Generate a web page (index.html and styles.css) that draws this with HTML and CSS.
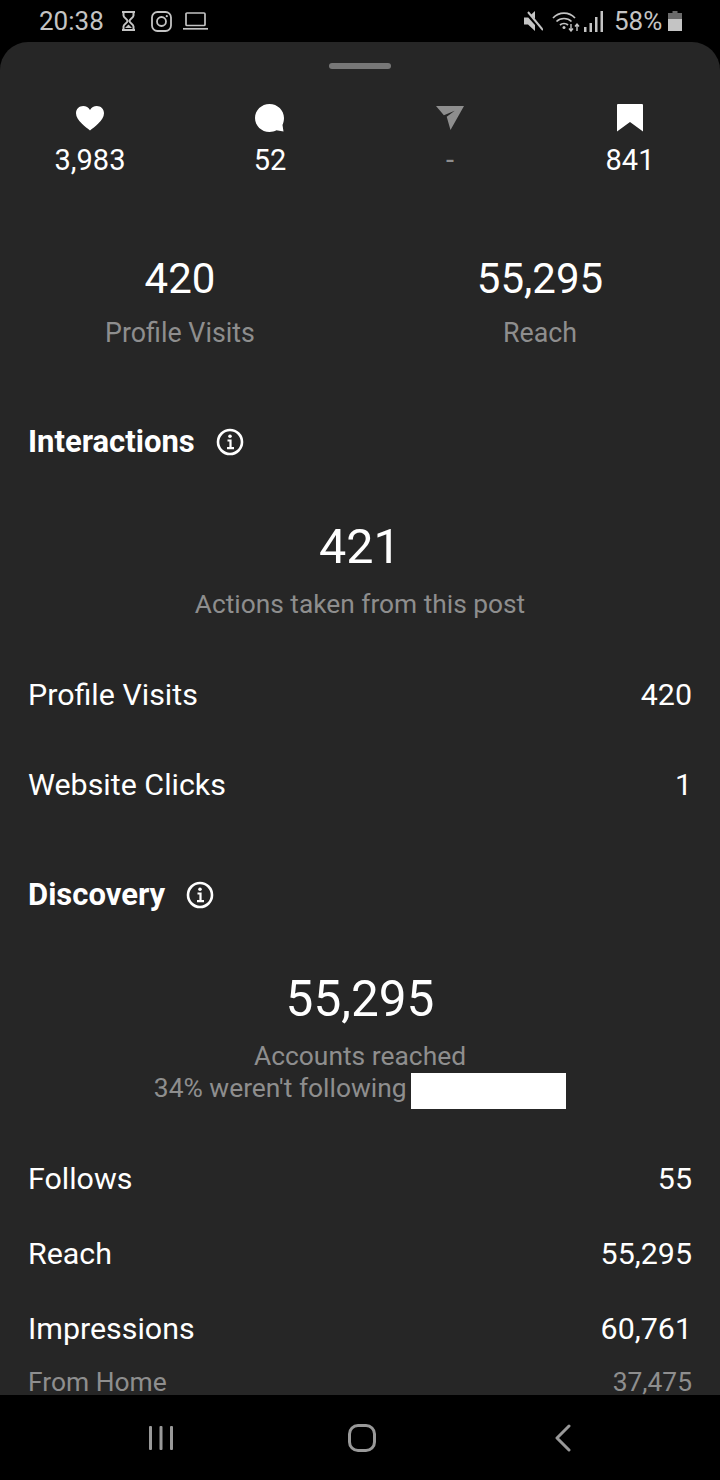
FILE: index.html
```html
<!DOCTYPE html>
<html lang="en">
<head>
    <meta charset="UTF-8" />
    <title>Post Insights</title>
    <link rel="stylesheet" href="styles.css">
</head>
<body>

<header class="status-bar">
    <span class="clock">20:38</span>
    <svg class="st-hourglass" width="15" height="20" viewBox="0 0 15 20" fill="none" stroke="#c4c4c4" stroke-width="2">
        <path d="M1 1h13M1 19h13M2.500 1v3.500c0 2.500 4 3.500 4 5.500s-4 3-4 5.500V19M12.500 1v3.500c0 2.500-4 3.500-4 5.500s4 3 4 5.500V19"/>
        <path d="M4 17l3.500-3.500L11 17z" fill="#c4c4c4" stroke="none"/>
    </svg>
    <svg class="st-insta" width="21" height="21" viewBox="0 0 21 21" fill="none" stroke="#c4c4c4" stroke-width="1.8">
        <rect x="1" y="1" width="19" height="19" rx="5.500"/>
        <circle cx="10.500" cy="10.500" r="4.500"/>
        <circle cx="15.800" cy="5.200" r="1.100" fill="#c4c4c4" stroke="none"/>
    </svg>
    <svg class="st-laptop" width="25" height="18" viewBox="0 0 25 18" fill="none" stroke="#c4c4c4" stroke-width="1.7">
        <rect x="3" y="1" width="19" height="12.500" rx="1"/>
        <path d="M0 16.800h25"/>
    </svg>
    <span class="status-spacer"></span>
    <svg class="st-mute" width="20" height="20" viewBox="0 0 20 20">
        <path d="M1 6.500h4L12 0v20l-7-6.500H1z" fill="#c4c4c4"/>
        <path d="M2 0l18 20" stroke="#000" stroke-width="4"/>
        <path d="M5 1l15 18" stroke="#c4c4c4" stroke-width="2"/>
    </svg>
    <svg class="st-wifi" width="28" height="21" viewBox="0 0 28 21" fill="none" stroke="#c4c4c4" stroke-width="1.700">
        <path d="M1 7c6-6.500 16-6.500 22 0M4.500 10.500c4-4 11-4 15 0M8 14c2.200-2 5.800-2 8 0"/>
        <circle cx="12" cy="16.500" r="1.500" fill="#c4c4c4" stroke="none"/>
        <path d="M19 13v7M17 17.500l2 2.500 2-2.500M25 20v-7M23 15.500l2-2.500 2 2.500" stroke-width="1.400"/>
    </svg>
    <svg class="st-signal" width="19" height="21" viewBox="0 0 19 21" fill="#c4c4c4">
        <rect x="0" y="16" width="2.500" height="5"/>
        <rect x="5.500" y="12" width="2.500" height="9"/>
        <rect x="11" y="6" width="2.500" height="15"/>
        <rect x="16.500" y="0" width="2.500" height="21"/>
    </svg>
    <span class="battery-pct">58%</span>
    <svg class="st-battery" width="14" height="20" viewBox="0 0 14 20">
        <path d="M4.500 0h5v2H14v18H0V2h4.500z" fill="#6a6a6a"/>
        <path d="M0 8h14v12H0z" fill="#c4c4c4"/>
    </svg>
</header>

<main class="sheet">
    <div class="handle"></div>

    <section class="counts">
        <div class="count">
            <svg width="28" height="28" viewBox="0 0 28 28" fill="#fff">
                <path d="M14 26.500C10 23 0 16.500 0 9.200 0 4.800 3.300 2 7.200 2 10 2 12.600 3.400 14 6c1.400-2.600 4-4 6.800-4C24.700 2 28 4.800 28 9.200c0 7.300-10 13.800-14 17.300z"/>
            </svg>
            <span class="count-value">3,983</span>
        </div>
        <div class="count">
            <svg width="30" height="28" viewBox="0 0 30 28" fill="#fff">
                <path d="M14.500 0C22.500 0 29 6.300 29 14c0 3-.8 5.300-1.500 7l1 6.500-7-1.200c-2 1-4.500 1.700-7 1.700C6.500 28 0 21.700 0 14S6.500 0 14.500 0z"/>
            </svg>
            <span class="count-value">52</span>
        </div>
        <div class="count muted">
            <svg width="28" height="28" viewBox="0 0 28 28" fill="#8e8e8e">
                <path d="M0 2h28L14.500 26l-3.800-13.200 8-6-10.800 4.400z"/>
            </svg>
            <span class="count-value">-</span>
        </div>
        <div class="count">
            <svg width="26" height="28" viewBox="0 0 26 28" fill="#fff">
                <path d="M0 1a1 1 0 0 1 1-1h24a1 1 0 0 1 1 1v26.500L13 18 0 27.500z"/>
            </svg>
            <span class="count-value">841</span>
        </div>
    </section>

    <section class="stats">
        <div>
            <div class="stat-value">420</div>
            <div class="caption">Profile Visits</div>
        </div>
        <div>
            <div class="stat-value">55,295</div>
            <div class="caption">Reach</div>
        </div>
    </section>

    <h2 class="section-title first">
        Interactions
        <svg class="info" width="28" height="28" viewBox="0 0 28 28" fill="none" stroke="#fff" stroke-width="2.600">
            <circle cx="14" cy="14" r="12"/>
            <path d="M11.500 12.500H14.500V20M11 20.200h7" stroke-width="2.200"/>
            <circle cx="14" cy="8.200" r="1.800" fill="#fff" stroke="none"/>
        </svg>
    </h2>

    <div class="summary">
        <div class="summary-value">421</div>
        <div class="caption summary-caption">Actions taken from this post</div>
    </div>

    <div class="rows interactions">
        <div class="row"><span>Profile Visits</span><span>420</span></div>
        <div class="row"><span>Website Clicks</span><span>1</span></div>
    </div>

    <h2 class="section-title second">
        Discovery
        <svg class="info" width="28" height="28" viewBox="0 0 28 28" fill="none" stroke="#fff" stroke-width="2.600">
            <circle cx="14" cy="14" r="12"/>
            <path d="M11.500 12.500H14.500V20M11 20.200h7" stroke-width="2.200"/>
            <circle cx="14" cy="8.200" r="1.800" fill="#fff" stroke="none"/>
        </svg>
    </h2>

    <div class="summary reach">
        <div class="summary-value wide">55,295</div>
        <div class="reach-note">
            Accounts reached<br>
            34% weren't following <span class="redacted"></span>
        </div>
    </div>

    <div class="rows discovery">
        <div class="row"><span>Follows</span><span>55</span></div>
        <div class="row"><span>Reach</span><span>55,295</span></div>
        <div class="row"><span>Impressions</span><span>60,761</span></div>
        <div class="row sub-row"><span>From Home</span><span>37,475</span></div>
    </div>
</main>

<nav class="nav-bar">
    <svg width="26" height="26" viewBox="0 0 26 26" fill="#999">
        <rect x="1" y="1" width="3" height="24" rx="1"/>
        <rect x="11.500" y="1" width="3" height="24" rx="1"/>
        <rect x="22" y="1" width="3" height="24" rx="1"/>
    </svg>
    <svg width="28" height="28" viewBox="0 0 28 28" fill="none" stroke="#999" stroke-width="3">
        <rect x="1.500" y="1.500" width="25" height="25" rx="8.500"/>
    </svg>
    <svg width="18" height="28" viewBox="0 0 18 28" fill="none" stroke="#999" stroke-width="3" stroke-linecap="round" stroke-linejoin="round">
        <path d="M15 2L3 14l12 12"/>
    </svg>
</nav>

</body>
</html>
```

FILE: styles.css
```css
html, body {
    margin: 0;
    padding: 0;
}
body {
    width: 720px;
    height: 1480px;
    display: flex;
    flex-direction: column;
    overflow: hidden;
    background: #000;
    color: #fff;
    font-family: Roboto, Arial, sans-serif;
}
svg {
    display: block;
    flex: none;
}

/* status bar */
.status-bar {
    height: 42px;
    flex: none;
    display: flex;
    align-items: center;
    padding: 0 38px 0 39px;
    color: #c4c4c4;
    font-size: 26px;
}
.clock {
    width: 65px;
    margin-right: 17px;
}
.st-insta {
    margin-left: 15px;
}
.st-laptop {
    margin-left: 11px;
}
.status-spacer {
    flex: 1;
}
.st-wifi {
    margin-left: 9px;
}
.st-signal {
    margin-left: 4px;
}
.battery-pct {
    margin-left: 11px;
    width: 47px;
}
.st-battery {
    margin-left: 7px;
}

/* sheet */
.sheet {
    flex: 1;
    min-height: 0;
    overflow: hidden;
    background: #262626;
    border-radius: 28px 28px 0 0;
    padding: 21px 28px 0;
}
.handle {
    width: 62px;
    height: 6px;
    margin: 0 auto;
    border-radius: 3px;
    background: #777;
}

.counts {
    display: grid;
    grid-template-columns: repeat(4, 180px);
    margin: 35px -28px 0;
}
.count {
    display: flex;
    flex-direction: column;
    align-items: center;
    gap: 10px;
}
.count-value {
    font-size: 29px;
    line-height: 36px;
}
.muted .count-value {
    color: #8e8e8e;
}

.stats {
    display: grid;
    grid-template-columns: repeat(2, 360px);
    margin: 76px -28px 0;
    text-align: center;
}
.stat-value {
    font-size: 42px;
    line-height: 50px;
}
.caption {
    margin-top: 11px;
    font-size: 26.8px;
    line-height: 36px;
    color: #8e8e8e;
}

.section-title {
    display: flex;
    align-items: center;
    gap: 21px;
    margin: 0;
    font-size: 31px;
    line-height: 40px;
    font-weight: 700;
}
.section-title.first {
    margin-top: 71px;
}
.section-title.second {
    margin-top: 70px;
}

.summary {
    margin-top: 55px;
    text-align: center;
}
.summary.reach {
    margin-top: 54px;
}
.summary-value {
    font-size: 48.5px;
    line-height: 60px;
}
.summary-value.wide {
    font-size: 49.5px;
}
.summary-caption {
    margin-top: 9px;
    font-size: 26.3px;
}
.reach-note {
    margin-top: 11px;
    font-size: 26.4px;
    line-height: 32px;
    color: #8e8e8e;
}
.redacted {
    display: inline-block;
    width: 155px;
    height: 36px;
    margin: 1px 0 -5px -2px;
    vertical-align: top;
    background: #fff;
}

.rows {
    display: flex;
    flex-direction: column;
}
.rows.interactions {
    margin-top: 53px;
    gap: 50px;
}
.rows.discovery {
    margin-top: 55px;
    gap: 35px;
}
.row {
    display: flex;
    justify-content: space-between;
    font-size: 30.4px;
    line-height: 40px;
}
.row.sub-row {
    margin-top: -22px;
    font-size: 26.4px;
    color: #8e8e8e;
}

/* nav bar */
.nav-bar {
    height: 85px;
    flex: none;
    display: grid;
    grid-template-columns: repeat(3, 1fr);
    justify-items: center;
    align-items: center;
    padding: 0 57px 0 60px;
}
```
